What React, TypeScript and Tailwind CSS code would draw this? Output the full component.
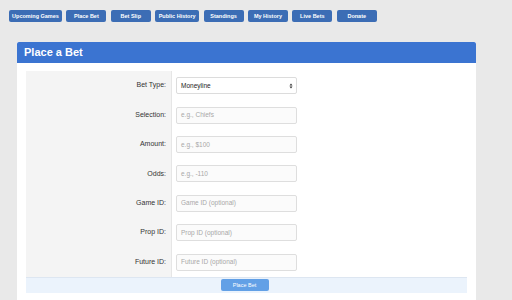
import React from "react";

const navItems: { label: string; w: string }[] = [
  { label: "Upcoming Games", w: "w-[53px]" },
  { label: "Place Bet", w: "w-[40px]" },
  { label: "Bet Slip", w: "w-[40px]" },
  { label: "Public History", w: "w-[44px]" },
  { label: "Standings", w: "w-[40px]" },
  { label: "My History", w: "w-[40px]" },
  { label: "Live Bets", w: "w-[40px]" },
  { label: "Donate", w: "w-[40px]" },
];

const fields = [
  { label: "Selection:", ph: "e.g., Chiefs" },
  { label: "Amount:", ph: "e.g., $100" },
  { label: "Odds:", ph: "e.g., -110" },
  { label: "Game ID:", ph: "Game ID (optional)" },
  { label: "Prop ID:", ph: "Prop ID (optional)" },
  { label: "Future ID:", ph: "Future ID (optional)" },
];

function Row({ label, children }: { label: string; children: React.ReactNode }) {
  return (
    <div className="flex h-[29.4px]">
      <div className="w-[146px] bg-[#f4f4f4] border-r border-[#e6e6e6] flex items-center justify-end pr-[5px] text-[7px] text-[#333]">
        {label}
      </div>
      <div className="flex-1 flex items-center pl-[4px]">{children}</div>
    </div>
  );
}

export default function App() {
  return (
    <div
      className="w-[512px] h-[300px] overflow-hidden bg-[#e9e9e9]"
      style={{ fontFamily: '"Liberation Sans", Arial, sans-serif' }}
    >
      <div className="flex gap-[4.4px] pl-[9px] pt-[10px]">
        {navItems.map((n) => (
          <div
            key={n.label}
            className={`${n.w} h-[12px] rounded-[2px] bg-[#3c6db5] text-white text-[5.5px] font-bold flex items-center justify-center whitespace-nowrap`}
          >
            {n.label}
          </div>
        ))}
      </div>

      <div className="ml-[17px] mt-[20px] w-[459px] bg-white">
        <div className="h-[21px] bg-[#3b74d1] rounded-t-[2px] flex items-center pl-[7px] text-white text-[11px] font-bold">
          Place a Bet
        </div>
        <div className="pt-[8px] px-[9px] pb-[7px]">
          <Row label="Bet Type:">
            <div className="w-[121px] h-[17px] border border-[#dcdcdc] rounded-[2px] bg-white flex items-center justify-between pl-[4px] pr-[3px] text-[6.5px] text-[#222]">
              <span>Moneyline</span>
              <svg width="4" height="6" viewBox="0 0 4 6">
                <path d="M0.5 2.4 L2 0.6 L3.5 2.4 Z" fill="#333" />
                <path d="M0.5 3.6 L2 5.4 L3.5 3.6 Z" fill="#333" />
              </svg>
            </div>
          </Row>
          {fields.map((f) => (
            <Row key={f.label} label={f.label}>
              <div className="w-[121px] h-[17px] border border-[#dedede] rounded-[2px] bg-[#fbfbfb] flex items-center pl-[4px] text-[6.5px] text-[#a8a8a8]">
                {f.ph}
              </div>
            </Row>
          ))}
          <div className="h-[16px] bg-[#ebf3fc] border-t border-[#dde6f1] flex items-center justify-center">
            <div className="w-[48px] h-[12px] rounded-[2px] bg-[#62a0e6] text-white text-[5.5px] flex items-center justify-center -ml-[4px]">
              Place Bet
            </div>
          </div>
        </div>
      </div>
    </div>
  );
}
